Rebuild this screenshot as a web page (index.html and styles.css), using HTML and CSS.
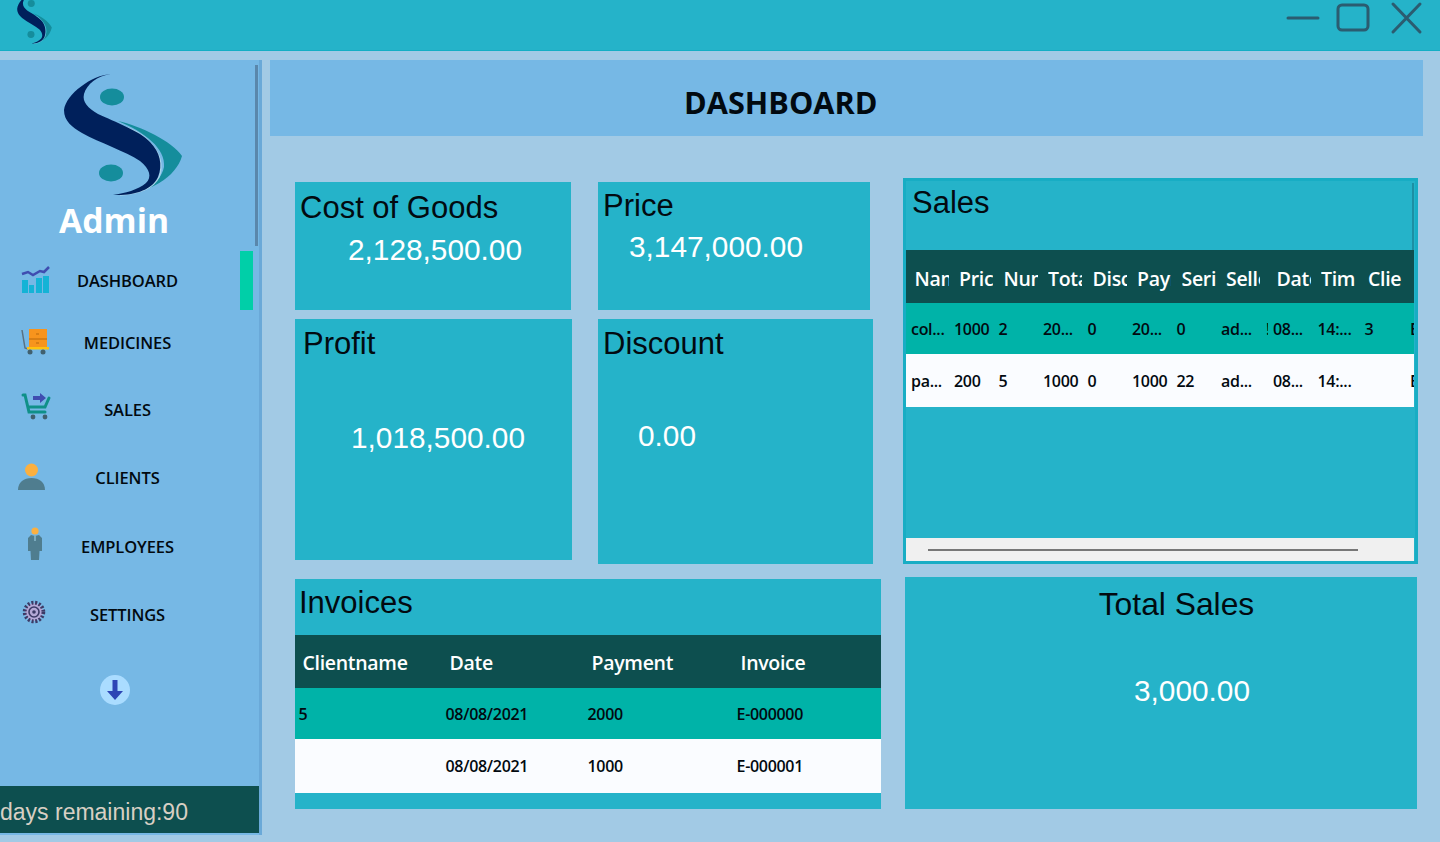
FILE: index.html
```html
<!DOCTYPE html>
<html lang="en">
<head>
    <meta charset="UTF-8">
    <meta name="viewport" content="width=device-width, initial-scale=1.0">
    <title>Dashboard</title>
    <link rel="stylesheet" href="styles.css">
</head>
<body>
    <svg class="defs" width="0" height="0">
        <symbol id="logo" viewBox="60 72 126 128" preserveAspectRatio="none">
            <path fill="#158d9c" d="M118 122 C140 127 172 142 182 157 C176 178 150 195 114 196 C140 193 160 187 164 168 C166 150 145 133 118 122 Z"/>
            <path fill="none" stroke="#a9d3ea" stroke-width="1.5" d="M128 129 C140 134 147 140 151 145 C161 156 163 167 159 178 C153 190 137 195 120 196"/>
            <path fill="#00205b" d="M111 75 C92 76 66 95 64 111 C64 122 72 128 82 134 C100 144 125 152 140 162 C150 170 152 178 146 184 C138 191 125 194 113 196 C134 197 152 191 158 178 C163 166 160 153 150 143 C140 132 115 123 98 115 C88 109 82 103 84 95 C87 85 97 77 111 75 Z"/>
            <ellipse fill="#158d9c" cx="112" cy="98" rx="12" ry="8.5"/>
            <ellipse fill="#158d9c" cx="111" cy="174" rx="12" ry="8.5"/>
        </symbol>
    </svg>

    <header class="titlebar">
        <svg class="titlebar-logo" width="37" height="52"><use href="#logo"/></svg>
        <div class="window-controls">
            <svg width="140" height="36" viewBox="0 0 140 36" fill="none" stroke="#2b5c70" stroke-width="3" stroke-linecap="round">
                <path d="M2 18 H32"/>
                <rect x="52" y="5" width="30" height="25" rx="4"/>
                <path d="M107 4 L134 32 M134 4 L107 32"/>
            </svg>
        </div>
    </header>

    <div class="page">
        <aside class="sidebar">
            <div class="sidebar-scroll"></div>
            <svg class="sidebar-logo" width="126" height="128"><use href="#logo"/></svg>
            <div class="admin-name">Admin</div>

            <nav class="nav">
                <a class="nav-item nav-dashboard">
                    <span class="nav-icon">
                        <svg width="30" height="28" viewBox="0 0 30 28">
                            <path fill="#14b3d6" d="M1 14h6v13H1zM8 19h5v8H8zM15 12h6v15h-6zM22 10h6v17h-6z"/>
                            <path fill="none" stroke="#3f4db0" stroke-width="2.5" d="M1 8 L7 6 L12 9 L19 5 L23 6 L28 1"/>
                        </svg>
                    </span>
                    <span class="nav-label">DASHBOARD</span>
                    <span class="nav-active"></span>
                </a>
                <a class="nav-item nav-medicines">
                    <span class="nav-icon">
                        <svg width="28" height="26" viewBox="0 0 28 26">
                            <path fill="none" stroke="#5a7282" stroke-width="1.5" d="M1 1 L4 19 L7 20"/>
                            <rect x="8" y="0" width="18" height="19" fill="#f7941d"/>
                            <path stroke="#b8690c" stroke-width="1" d="M8 10H26M15 5h3M15 14h3"/>
                            <rect x="6" y="18" width="22" height="2.5" fill="#ffc20e"/>
                            <circle cx="9" cy="23" r="2.5" fill="#41606e"/>
                            <circle cx="22" cy="23" r="2.5" fill="#41606e"/>
                        </svg>
                    </span>
                    <span class="nav-label">MEDICINES</span>
                </a>
                <a class="nav-item nav-sales">
                    <span class="nav-icon">
                        <svg width="30" height="27" viewBox="0 0 30 27">
                            <path fill="none" stroke="#0f9088" stroke-width="3" stroke-linecap="round" d="M2 2 H4 L8 19 H24 M28 5 L24 14 H7"/>
                            <circle cx="12" cy="24" r="2.4" fill="#41606e"/>
                            <circle cx="24" cy="24" r="2.4" fill="#41606e"/>
                            <path fill="#3f4db0" d="M12 3h7V0l6 5-6 5V7h-7z"/>
                        </svg>
                    </span>
                    <span class="nav-label">SALES</span>
                </a>
                <a class="nav-item nav-clients">
                    <span class="nav-icon">
                        <svg width="27" height="27" viewBox="0 0 27 27">
                            <circle cx="13.5" cy="7" r="6.5" fill="#fbb040"/>
                            <path fill="#4f7d8f" d="M0 27 C0 19 6 15 13.5 15 C21 15 27 19 27 27 Z"/>
                        </svg>
                    </span>
                    <span class="nav-label">CLIENTS</span>
                </a>
                <a class="nav-item nav-employees">
                    <span class="nav-icon">
                        <svg width="14" height="34" viewBox="0 0 14 34">
                            <circle cx="7" cy="4" r="3.600" fill="#fbb040"/>
                            <path fill="#4f7d8f" d="M3 8 L7 9 L11 8 L14 11 V24 H11.5 L11 33 H3 L2.5 24 H0 V11 Z"/>
                            <path stroke="#a6d8ea" stroke-width="1" d="M7 9V14"/>
                        </svg>
                    </span>
                    <span class="nav-label">EMPLOYEES</span>
                </a>
                <a class="nav-item nav-settings">
                    <span class="nav-icon">
                        <svg width="24" height="24" viewBox="0 0 24 24">
                            <circle cx="12" cy="12" r="9" fill="#b4a8d6" stroke="#3c3a66" stroke-width="4.5" stroke-dasharray="2 1.6"/>
                            <circle cx="12" cy="12" r="7.6" fill="#b4a8d6"/>
                            <circle cx="12" cy="12" r="5" fill="none" stroke="#3c3a66" stroke-width="1.6"/>
                            <circle cx="12" cy="12" r="1.8" fill="#3c3a66"/>
                        </svg>
                    </span>
                    <span class="nav-label">SETTINGS</span>
                </a>
            </nav>

            <div class="more-button">
                <svg width="16" height="20" viewBox="0 0 16 20"><path fill="#2d45b5" d="M5.500 0h5v11H16l-8 9-8-9h5.500z"/></svg>
            </div>

            <div class="days-left">days remaining:90</div>
        </aside>

        <main class="main">
            <div class="page-heading"><h1>DASHBOARD</h1></div>

            <div class="dashboard">
                <div class="left-col">
                    <div class="card-row row-top">
                        <section class="card card-cost">
                            <h2>Cost of Goods</h2>
                            <p class="amount">2,128,500.00</p>
                        </section>
                        <section class="card card-price">
                            <h2>Price</h2>
                            <p class="amount">3,147,000.00</p>
                        </section>
                    </div>
                    <div class="card-row row-mid">
                        <section class="card card-profit">
                            <h2>Profit</h2>
                            <p class="amount">1,018,500.00</p>
                        </section>
                        <section class="card card-discount">
                            <h2>Discount</h2>
                            <p class="amount">0.00</p>
                        </section>
                    </div>
                    <section class="card card-invoices">
                        <h2>Invoices</h2>
                        <table class="invoice-table">
                            <thead>
                                <tr><th class="col-client">Clientname</th><th class="col-date">Date</th><th class="col-payment">Payment</th><th>Invoice</th></tr>
                            </thead>
                            <tbody>
                                <tr class="row-selected"><td>5</td><td>08/08/2021</td><td>2000</td><td>E-000000</td></tr>
                                <tr><td></td><td>08/08/2021</td><td>1000</td><td>E-000001</td></tr>
                            </tbody>
                        </table>
                    </section>
                </div>

                <div class="right-col">
                    <section class="card card-sales">
                        <div class="sales-scroll"></div>
                        <h2>Sales</h2>
                        <div class="sales-body">
                            <table class="sales-table">
                                <thead>
                                    <tr>
                                        <th><span>Name</span></th><th><span>Price</span></th><th><span>Number</span></th><th><span>Total</span></th><th><span>Discount</span></th><th><span>Payment</span></th><th><span>Serial</span></th><th><span>Seller</span></th><th class="col-narrow"></th><th><span>Date</span></th><th class="col-time"><span>Time</span></th><th><span>Client</span></th><th class="col-last"></th>
                                    </tr>
                                </thead>
                                <tbody>
                                    <tr class="row-selected">
                                        <td>col...</td><td>1000</td><td>2</td><td>20...</td><td>0</td><td>20...</td><td>0</td><td>ad...</td><td class="col-narrow">!</td><td>08...</td><td>14:...</td><td>3</td><td class="col-last">E-000000</td>
                                    </tr>
                                    <tr>
                                        <td>pa...</td><td>200</td><td>5</td><td>1000</td><td>0</td><td>1000</td><td>22</td><td>ad...</td><td class="col-narrow"></td><td>08...</td><td>14:...</td><td></td><td class="col-last">E-000001</td>
                                    </tr>
                                </tbody>
                            </table>
                        </div>
                        <div class="hscroll"><div class="hscroll-thumb"></div></div>
                    </section>
                    <section class="card card-total">
                        <h2>Total Sales</h2>
                        <p class="amount">3,000.00</p>
                    </section>
                </div>
            </div>
        </main>
    </div>
</body>
</html>
```

FILE: styles.css
```css
body {
    font-family: "Liberation Sans", Arial, sans-serif;
    margin: 0;
    padding: 0;
    height: 842px;
    overflow: hidden;
    background-color: #a2cae5;
}
.defs {
    position: absolute;
}
.titlebar {
    display: flex;
    justify-content: space-between;
    height: 50px;
    overflow: hidden;
    background-color: #25b3c9;
    border-bottom: 1px solid #14aec4;
}
.titlebar-logo {
    margin: -7px 0 0 16px;
}
.window-controls {
    padding-right: 14px;
}
.page {
    display: flex;
    padding-top: 9px;
}

/* sidebar */
.sidebar {
    position: relative;
    width: 259px;
    height: 775px;
    border-right: 3px solid #6aa9d8;
    background-color: #76b8e5;
}
.sidebar-scroll {
    position: absolute;
    top: 5px;
    right: 1px;
    width: 3px;
    height: 181px;
    background-color: #5a87ab;
}
.sidebar-logo {
    display: block;
    margin: 11px 0 0 60px;
}
.admin-name {
    margin-top: -1px;
    padding-left: 59px;
    font-family: "Open Sans", sans-serif;
    font-size: 33.7px;
    font-weight: 700;
    line-height: 44px;
    color: #fff;
}
.nav {
    margin-top: 9px;
}
.nav-item {
    position: relative;
    display: flex;
    align-items: center;
    color: #020a10;
}
.nav-icon {
    display: flex;
    width: 60px;
    box-sizing: border-box;
}
.nav-label {
    width: 135px;
    text-align: center;
    font-family: "Open Sans", sans-serif;
    font-size: 16.5px;
    font-weight: 600;
    letter-spacing: -0.1px;
}
.nav-active {
    position: absolute;
    left: 240px;
    top: 0;
    width: 13px;
    height: 59px;
    background-color: #00cfa8;
}
.nav-dashboard { height: 59px; }
.nav-dashboard .nav-icon { padding: 0 0 2px 21px; }
.nav-medicines { height: 65px; }
.nav-medicines .nav-icon { padding: 0 0 2px 21px; }
.nav-sales { height: 68px; }
.nav-sales .nav-icon { padding: 0 0 5px 21px; }
.nav-clients { height: 69px; }
.nav-clients .nav-icon { padding: 0 0 2px 18px; }
.nav-employees { height: 68px; }
.nav-employees .nav-icon { padding: 0 0 4px 28px; }
.nav-settings { height: 68px; }
.nav-settings .nav-icon { padding: 0 0 5px 22px; }
.more-button {
    display: flex;
    align-items: center;
    justify-content: center;
    width: 30px;
    height: 30px;
    margin: 27px 0 0 100px;
    border-radius: 50%;
    background-color: #aadcff;
}
.days-left {
    position: absolute;
    left: 0;
    bottom: 2px;
    width: 100%;
    height: 47px;
    padding-top: 11px;
    box-sizing: border-box;
    background-color: #0d4f4f;
    color: #d8cfc4;
    font-size: 23px;
    line-height: 30px;
}

/* main */
.main {
    width: 1153px;
    margin-left: 8px;
}
.page-heading {
    height: 76px;
    padding-left: 414px;
    background-color: #76b8e5;
}
.page-heading h1 {
    margin: 0;
    font-family: "Open Sans", sans-serif;
    font-size: 30.7px;
    font-weight: 700;
    line-height: 85px;
    color: #020a10;
}
.dashboard {
    display: flex;
    padding-left: 25px;
}
.left-col {
    width: 586px;
    margin-top: 46px;
}
.right-col {
    width: 515px;
    margin: 42px 0 0 22px;
}
.card-row {
    display: flex;
    align-items: flex-start;
}
.row-top {
    height: 137px;
}
.row-mid {
    height: 260px;
}
.card {
    background-color: #25b3c9;
    color: #020a10;
    box-sizing: border-box;
}
.card h2 {
    margin: 0;
    font-size: 31px;
    font-weight: 400;
    line-height: 36px;
}
.amount {
    margin: 0;
    font-size: 29.8px;
    line-height: 36px;
    color: #fff;
}
.card-cost {
    width: 276px;
    height: 128px;
    padding: 8px 0 0 5px;
}
.card-cost .amount { margin: 6px 0 0 48px; }
.card-price {
    width: 272px;
    height: 128px;
    margin-left: 27px;
    padding: 6px 0 0 5px;
}
.card-price .amount { margin: 5px 0 0 26px; }
.card-profit {
    width: 277px;
    height: 241px;
    padding: 7px 0 0 8px;
}
.card-profit .amount { margin: 58px 0 0 48px; }
.card-discount {
    width: 275px;
    height: 245px;
    margin-left: 26px;
    padding: 7px 0 0 5px;
}
.card-discount .amount { margin: 56px 0 0 35px; }
.card-invoices {
    height: 230px;
}
.card-invoices h2 {
    height: 56px;
    padding: 6px 0 0 4px;
    box-sizing: border-box;
}
.invoice-table, .sales-table {
    border-collapse: collapse;
    table-layout: fixed;
    font-family: "Open Sans", sans-serif;
}
.invoice-table {
    width: 586px;
}
.invoice-table th {
    height: 53px;
    padding: 2px 0 0 7.5px;
    box-sizing: border-box;
    background-color: #0d4f4f;
    color: #fff;
    font-size: 19.5px;
    font-weight: 600;
    letter-spacing: -0.3px;
    text-align: left;
}
.invoice-table .col-client { width: 147px; }
.invoice-table .col-date { width: 142px; }
.invoice-table .col-payment { width: 149px; }
.invoice-table td {
    height: 54px;
    padding: 0 0 0 3.5px;
    background-color: #fafcff;
    font-size: 16px;
    font-weight: 600;
    letter-spacing: -0.3px;
}
.invoice-table .row-selected td {
    height: 51px;
    background-color: #00b3a8;
}
.card-sales {
    position: relative;
    height: 386px;
    border: 3px solid #18adc4;
}
.card-sales h2 {
    height: 69px;
    padding: 4px 0 0 6px;
    box-sizing: border-box;
}
.sales-scroll {
    position: absolute;
    top: 2px;
    right: 1px;
    width: 2px;
    height: 67px;
    background-color: #1d8fa3;
}
.sales-body {
    height: 288px;
}
.sales-table {
    width: 508px;
}
.sales-table th {
    width: 44.5px;
    height: 53px;
    padding: 3px 0 0 8.5px;
    box-sizing: border-box;
    background-color: #0d4f4f;
    color: #fff;
    font-size: 19.5px;
    font-weight: 600;
    letter-spacing: -0.3px;
    text-align: left;
}
.sales-table th span {
    display: block;
    width: 34px;
    overflow: hidden;
    white-space: nowrap;
}
.sales-table td {
    height: 53px;
    padding: 0 0 0 5px;
    overflow: hidden;
    white-space: nowrap;
    background-color: #fafcff;
    font-size: 16px;
    font-weight: 600;
    letter-spacing: -0.3px;
}
.sales-table td:nth-child(n+2):nth-child(-n+8) {
    padding-left: 3.5px;
}
.sales-table .row-selected td {
    height: 51px;
    background-color: #00b3a8;
}
.sales-table .col-narrow {
    width: 6px;
    padding: 0;
}
.sales-table td.col-narrow {
    padding-left: 4px;
}
.sales-table .col-time {
    width: 47px;
}
.sales-table .col-last {
    width: 10px;
    padding: 0 0 0 6px;
}
.hscroll {
    display: flex;
    align-items: center;
    height: 23px;
    width: 508px;
    padding-left: 22px;
    box-sizing: border-box;
    background-color: #f0f0f0;
}
.hscroll-thumb {
    width: 430px;
    height: 2px;
    background-color: #777;
}
.card-total {
    width: 512px;
    height: 232px;
    margin: 13px 0 0 2px;
    padding-top: 9px;
}
.card-total h2 {
    text-align: center;
    padding-left: 31px;
    font-size: 31.8px;
}
.card-total .amount {
    margin-top: 51px;
    padding-left: 229px;
}
```
